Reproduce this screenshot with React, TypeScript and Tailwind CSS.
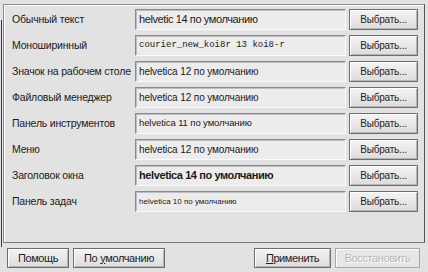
import React from "react";

type Row = {
  label: string;
  value: string;
  valueClass: string;
};

const rows: Row[] = [
  { label: "Обычный текст", value: "helvetic 14 по умолчанию", valueClass: "text-[11px] tracking-[-0.4px]" },
  {
    label: "Моноширинный",
    value: "courier_new_koi8r 13 koi8-r",
    valueClass: "text-[9px] [font-family:'Liberation_Mono',monospace]",
  },
  { label: "Значок на рабочем столе", value: "helvetica 12 по умолчанию", valueClass: "text-[10px] tracking-[-0.1px]" },
  { label: "Файловый менеджер", value: "helvetica 12 по умолчанию", valueClass: "text-[10px] tracking-[-0.1px]" },
  { label: "Панель инструментов", value: "helvetica 11 по умолчанию", valueClass: "text-[9.5px] tracking-[-0.1px]" },
  { label: "Меню", value: "helvetica 12 по умолчанию", valueClass: "text-[10px] tracking-[-0.1px]" },
  { label: "Заголовок окна", value: "helvetica 14 по умолчанию", valueClass: "text-[11px] font-bold tracking-[-0.4px]" },
  { label: "Панель задач", value: "helvetica 10 по умолчанию", valueClass: "text-[8px]" },
];

const btn =
  "h-full flex items-center justify-center border border-[#6e6e6e] bg-gradient-to-b from-[#f4f4f4] to-[#dcdcdc] shadow-[inset_1px_1px_0_#ffffff,inset_-1px_-1px_0_#b4b4b4] text-[#222]";

export default function App() {
  return (
    <div className="w-[428px] h-[272px] bg-[#e2e2e2] flex overflow-hidden [font-family:'Liberation_Sans',Arial,sans-serif] text-[#1a1a1a]">
      {/* window edge */}
      <div className="w-[3px] pt-[20px]">
        <div className="ml-[1px] w-[1px] h-[227px] bg-[#3a3a3a]" />
      </div>

      <div className="flex flex-col w-[423px]">
        {/* Tab frame */}
        <div className="mt-[4px] w-[422px] h-[239px] border-t border-l border-[#8c8c8c] border-r-[#555] border-r border-b border-b-[#7a7a7a] shadow-[inset_1px_1px_0_#ffffff] pt-[4px] pl-[8px] flex flex-col gap-[5px]">
          {rows.map((r) => (
            <div key={r.label} className="flex items-center h-[21px]">
              <div className="w-[123px] text-[10.5px] tracking-[-0.2px] whitespace-nowrap">{r.label}</div>
              <div className="w-[211px] h-full flex items-center pl-[3px] bg-[#ececec] border-t border-l border-[#8a8a8a] border-b border-r border-b-[#fafafa] border-r-[#fafafa] shadow-[inset_1px_1px_0_#bdbdbd] whitespace-nowrap overflow-hidden">
                <span className={r.valueClass}>{r.value}</span>
              </div>
              <div className="ml-[3px] w-[69px] h-[21px]">
                <div className={`${btn} text-[10px] tracking-[-0.2px]`}>Выбрать...</div>
              </div>
            </div>
          ))}
        </div>

        {/* Bottom buttons */}
        <div className="flex items-center h-[20px] mt-[5px] pl-[4px] text-[11px] tracking-[-0.4px]">
          <div className="w-[62px] h-full">
            <div className={btn}>Помощь</div>
          </div>
          <div className="ml-[4px] w-[92px] h-full">
            <div className={btn}>
              По <span className="underline ml-[3px]">у</span>молчанию
            </div>
          </div>
          <div className="ml-[89px] w-[77px] h-full">
            <div className={btn}>
              <span className="underline">П</span>рименить
            </div>
          </div>
          <div className="ml-[4px] w-[85px] h-full">
            <div className="h-full flex items-center justify-center border border-[#a8a8a8] bg-[#e6e6e6] shadow-[inset_1px_1px_0_#ffffff] text-[#b8b8b8] [text-shadow:1px_1px_0_#ffffff]">
              Восстановить
            </div>
          </div>
        </div>
      </div>
    </div>
  );
}
